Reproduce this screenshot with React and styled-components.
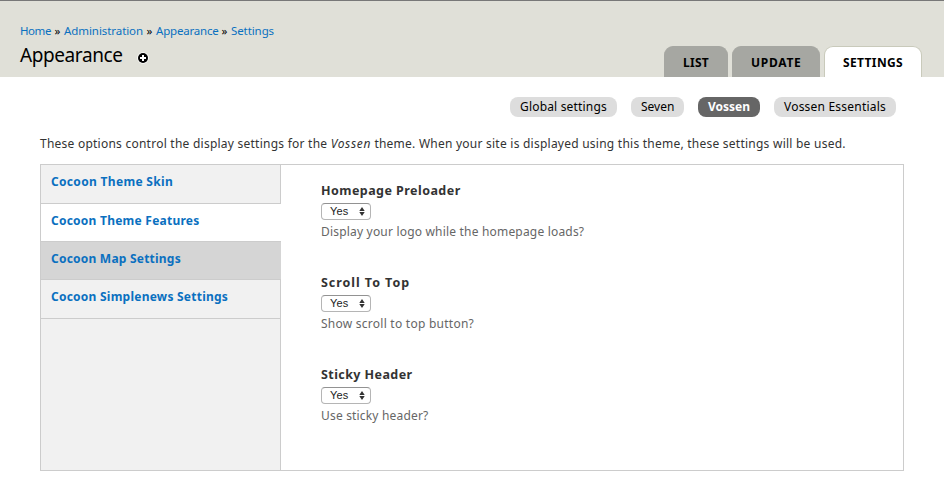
import React from "react";
import styled, { createGlobalStyle } from "styled-components";

const GlobalStyle = createGlobalStyle`
  * { box-sizing: border-box; }
  body {
    margin: 0;
    background: #fff;
    color: #333;
    font: 12px/16px "Noto Sans", "Open Sans", sans-serif;
  }
`;

const Page = styled.div`
  height: 479px;
  overflow: hidden;
`;

const Branding = styled.header`
  height: 77px;
  padding: 22px 22px 0 20px;
  display: flex;
  justify-content: space-between;
  background: #e0e0d8;
  border-top: 1px solid #787878;
`;

const Breadcrumb = styled.nav`
  height: 16px;
  display: flex;
  font-size: 11.5px;
  color: #000;
  white-space: nowrap;
`;

const Crumb = styled.a`
  width: ${(p) => p.$width}px;
  color: #0a70c0;
  letter-spacing: ${(p) => p.$track}px;
`;

const Separator = styled.span`
  width: 13px;
  text-align: center;
`;

const TitleRow = styled.div`
  display: flex;
  align-items: center;
  height: 28px;
  margin-top: 2px;
`;

const Title = styled.h1`
  width: 117px;
  margin: 0;
  font-size: 19px;
  line-height: 28px;
  font-weight: 400;
  letter-spacing: -0.41px;
  color: #000;
`;

const AddShortcut = styled.svg`
  display: block;
  margin-top: 5px;
`;

const PrimaryTabs = styled.nav`
  display: flex;
  gap: 4px;
  margin-top: 23px;
`;

const PrimaryTab = styled.a`
  width: ${(p) => p.$width}px;
  height: 31px;
  padding: 8px 0 0 18px;
  font-weight: 700;
  letter-spacing: ${(p) => p.$track}px;
  white-space: nowrap;
  color: #000;
  background: ${(p) => (p.$active ? "#fff" : "#a6a7a2")};
  border: 1px solid ${(p) => (p.$active ? "#c9cabb" : "#a6a7a2")};
  border-bottom: 0;
  border-radius: 9px 9px 0 0;
`;

const SecondaryTabs = styled.nav`
  display: flex;
  justify-content: flex-end;
  gap: 14px;
  padding: 20px 48px 0 0;
`;

const Pill = styled.a`
  width: ${(p) => p.$width}px;
  height: 20px;
  padding-left: 10px;
  line-height: 20px;
  font-weight: ${(p) => (p.$active ? 700 : 400)};
  letter-spacing: ${(p) => p.$track}px;
  white-space: nowrap;
  color: ${(p) => (p.$active ? "#fff" : "#000")};
  background: ${(p) => (p.$active ? "#666" : "#ddd")};
  border-radius: 8px;
`;

const Intro = styled.p`
  margin: 19px 0 0 40px;
  letter-spacing: 0.24px;
  white-space: nowrap;
`;

const ThemeName = styled.em`
  letter-spacing: 0.65px;
`;

const Panel = styled.section`
  display: flex;
  width: 864px;
  height: 307px;
  margin: 12px 0 0 40px;
  border: 1px solid #ccc;
`;

const Sidebar = styled.nav`
  width: 240px;
  background: #f1f1f1;
  display: flex;
  flex-direction: column;
`;

const SidebarFill = styled.div`
  flex: 1;
  border-right: 1px solid #ccc;
`;

const fills = { normal: "#f1f1f1", selected: "#fff", hover: "#d5d5d5" };
const edges = { normal: "#ccc", selected: "#fff", hover: "#d5d5d5" };

const SidebarItem = styled.a`
  height: ${(p) => p.$height}px;
  padding: 9px 0 0 10px;
  font-weight: 700;
  letter-spacing: ${(p) => p.$track}px;
  color: #0a70c0;
  background: ${(p) => fills[p.$state]};
  border-bottom: 1px solid #ccc;
  box-shadow: inset -1px 0 ${(p) => edges[p.$state]};
`;

const Fields = styled.form`
  padding: 18px 0 0 40px;
`;

const Field = styled.div`
  height: 92px;
`;

const Label = styled.label`
  display: block;
  height: 20px;
  font-size: 12.5px;
  font-weight: 700;
  letter-spacing: ${(p) => p.$track}px;
`;

const SelectBox = styled.div`
  display: flex;
  justify-content: space-between;
  align-items: center;
  width: 50px;
  height: 17px;
  padding: 0 5px 0 8px;
  border: 1px solid #b5b5b5;
  border-top-color: #929292;
  border-radius: 4px;
  background: #fff;
  font: 11px/15px "Liberation Sans", Arial, sans-serif;
  letter-spacing: 0.1px;
  color: #1a1a1a;
`;

const Help = styled.div`
  margin-top: 4px;
  color: #666;
  letter-spacing: ${(p) => p.$track}px;
`;

const crumbs = [
  ["Home", 31, -0.43],
  ["Administration", 79, -0.07],
  ["Appearance", 62, -0.2],
  ["Settings", 43, -0.09],
];

const sections = [
  ["Cocoon Theme Skin", 39, 0.32, "normal"],
  ["Cocoon Theme Features", 38, 0.24, "selected"],
  ["Cocoon Map Settings", 38, 0.22, "hover"],
  ["Cocoon Simplenews Settings", 39, 0.24, "normal"],
];

const fields = [
  ["Homepage Preloader", 0.45, "Display your logo while the homepage loads?", 0.19],
  ["Scroll To Top", 0.95, "Show scroll to top button?", 0.25],
  ["Sticky Header", 0.42, "Use sticky header?", 0.18],
];

function Arrows() {
  return (
    <svg width="6" height="9" viewBox="0 0 6 9" fill="#333" aria-hidden="true">
      <path d="M3 0 5.7 4H.3zM3 9 .3 5h5.4z" />
    </svg>
  );
}

export default function App() {
  return (
    <Page>
      <GlobalStyle />
      <Branding>
        <div>
          <Breadcrumb>
            {crumbs.map(([name, width, track], i) => (
              <React.Fragment key={name}>
                {i > 0 && <Separator>»</Separator>}
                <Crumb $width={width} $track={track}>{name}</Crumb>
              </React.Fragment>
            ))}
          </Breadcrumb>
          <TitleRow>
            <Title>Appearance</Title>
            <AddShortcut width="12" height="12" viewBox="0 0 12 12">
              <circle cx="6" cy="6" r="5.8" fill="#fff" />
              <circle cx="6" cy="6" r="5" fill="#000" />
              <path d="M6 3v6M3 6h6" stroke="#fff" strokeWidth="2" />
            </AddShortcut>
          </TitleRow>
        </div>
        <PrimaryTabs>
          <PrimaryTab $width={64} $track={0.27}>LIST</PrimaryTab>
          <PrimaryTab $width={88} $track={0.72}>UPDATE</PrimaryTab>
          <PrimaryTab $width={98} $track={0.36} $active>SETTINGS</PrimaryTab>
        </PrimaryTabs>
      </Branding>
      <SecondaryTabs>
        <Pill $width={107} $track={0.18}>Global settings</Pill>
        <Pill $width={53} $track={-0.02}>Seven</Pill>
        <Pill $width={62} $track={0} $active>Vossen</Pill>
        <Pill $width={122} $track={0.21}>Vossen Essentials</Pill>
      </SecondaryTabs>
      <Intro>
        These options control the display settings for the <ThemeName>Vossen</ThemeName> theme. When your site is displayed using this theme, these settings will be used.
      </Intro>
      <Panel>
        <Sidebar>
          {sections.map(([name, height, track, state]) => (
            <SidebarItem key={name} $height={height} $track={track} $state={state}>{name}</SidebarItem>
          ))}
          <SidebarFill />
        </Sidebar>
        <Fields>
          {fields.map(([label, track, help, helpTrack]) => (
            <Field key={label}>
              <Label $track={track}>{label}</Label>
              <SelectBox>Yes<Arrows /></SelectBox>
              <Help $track={helpTrack}>{help}</Help>
            </Field>
          ))}
        </Fields>
      </Panel>
    </Page>
  );
}
